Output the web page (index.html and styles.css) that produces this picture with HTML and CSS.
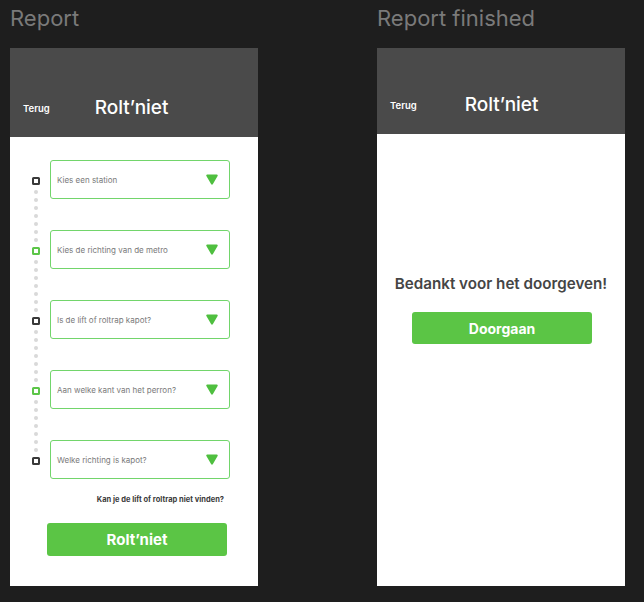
FILE: index.html
```html
<!DOCTYPE html>
<html lang="nl">
<head>
<meta charset="utf-8">
<title>Rolt'niet</title>
<link rel="stylesheet" href="styles.css">
</head>
<body>
<div class="board">
  <section class="artboard">
    <div class="label">Report</div>
    <div class="frame">
      <header class="header header--tall">
        <span class="back">Terug</span>
        <span class="title title--left">Rolt’niet</span>
      </header>
      <main class="body body--form">
        <div class="steps">
          <div class="timeline">
            <span class="sq"></span>
            <span class="dots"><i></i><i></i><i></i><i></i><i></i><i></i><i></i></span>
            <span class="sq sq--green"></span>
            <span class="dots"><i></i><i></i><i></i><i></i><i></i><i></i><i></i></span>
            <span class="sq"></span>
            <span class="dots"><i></i><i></i><i></i><i></i><i></i><i></i><i></i></span>
            <span class="sq sq--green"></span>
            <span class="dots"><i></i><i></i><i></i><i></i><i></i><i></i><i></i></span>
            <span class="sq"></span>
          </div>
          <div class="fields">
            <div class="select"><span>Kies een station</span><svg class="caret" viewBox="0 0 12 11"><path d="M1.2 0.6h9.6c0.8 0 1.2 0.8 0.8 1.4l-4.8 8.3c-0.4 0.6-1.2 0.6-1.6 0l-4.8-8.3c-0.4-0.6 0-1.4 0.8-1.4z"/></svg></div>
            <div class="select"><span>Kies de richting van de metro</span><svg class="caret" viewBox="0 0 12 11"><path d="M1.2 0.6h9.6c0.8 0 1.2 0.8 0.8 1.4l-4.8 8.3c-0.4 0.6-1.2 0.6-1.6 0l-4.8-8.3c-0.4-0.6 0-1.4 0.8-1.4z"/></svg></div>
            <div class="select"><span>Is de lift of roltrap kapot?</span><svg class="caret" viewBox="0 0 12 11"><path d="M1.2 0.6h9.6c0.8 0 1.2 0.8 0.8 1.4l-4.8 8.3c-0.4 0.6-1.2 0.6-1.6 0l-4.8-8.3c-0.4-0.6 0-1.4 0.8-1.4z"/></svg></div>
            <div class="select"><span>Aan welke kant van het perron?</span><svg class="caret" viewBox="0 0 12 11"><path d="M1.2 0.6h9.6c0.8 0 1.2 0.8 0.8 1.4l-4.8 8.3c-0.4 0.6-1.2 0.6-1.6 0l-4.8-8.3c-0.4-0.6 0-1.4 0.8-1.4z"/></svg></div>
            <div class="select"><span>Welke richting is kapot?</span><svg class="caret" viewBox="0 0 12 11"><path d="M1.2 0.6h9.6c0.8 0 1.2 0.8 0.8 1.4l-4.8 8.3c-0.4 0.6-1.2 0.6-1.6 0l-4.8-8.3c-0.4-0.6 0-1.4 0.8-1.4z"/></svg></div>
          </div>
        </div>
        <p class="hint">Kan je de lift of roltrap niet vinden?</p>
        <button class="btn btn--submit">Rolt’niet</button>
      </main>
    </div>
  </section>

  <section class="artboard">
    <div class="label">Report finished</div>
    <div class="frame">
      <header class="header header--short">
        <span class="back">Terug</span>
        <span class="title title--right">Rolt’niet</span>
      </header>
      <main class="body body--done">
        <p class="thanks">Bedankt voor het doorgeven!</p>
        <button class="btn btn--next">Doorgaan</button>
      </main>
    </div>
  </section>
</div>
</body>
</html>
```

FILE: styles.css
```css
* { box-sizing: border-box; }

html, body {
  margin: 0;
  padding: 0;
  background: #1e1e1e;
  font-family: Inter, "Noto Sans", "Liberation Sans", sans-serif;
  width: 644px;
  height: 602px;
  overflow: hidden;
}

.board {
  display: flex;
  gap: 119px;
  padding-left: 10px;
}

.artboard {
  display: flex;
  flex-direction: column;
  width: 248px;
}

.label {
  height: 48px;
  padding-top: 6px;
  font-size: 22px;
  line-height: 25px;
  color: #7a7a7a;
  white-space: nowrap;
}

.frame {
  height: 538px;
  background: #ffffff;
  display: flex;
  flex-direction: column;
}

.header {
  background: #4a4a4a;
  display: flex;
  align-items: flex-start;
  padding-left: 13px;
  color: #ffffff;
  flex: none;
}
.header--tall { height: 89px; padding-top: 48px; }
.header--short { height: 86px; padding-top: 45px; }

.back {
  font-size: 9.5px;
  line-height: 12px;
  font-weight: 600;
  margin-top: 7px;
}

.title {
  font-size: 19px;
  line-height: 24px;
  font-weight: 500;
}
.title--left { margin-left: 45px; }
.title--right { margin-left: 48px; }

.body {
  flex: 1;
  display: flex;
  flex-direction: column;
}

.body--form {
  padding: 23px 28px 0 22px;
}

.steps {
  display: flex;
  gap: 10px;
}

.timeline {
  width: 8px;
  padding-top: 17px;
  display: flex;
  flex-direction: column;
  align-items: center;
}

.sq {
  width: 8px;
  height: 8px;
  border: 2px solid #3a3a3a;
  border-radius: 1.5px;
  background: #fff;
  flex: none;
}
.sq--green { border-color: #5cc648; }

.dots {
  display: flex;
  flex-direction: column;
  align-items: center;
  gap: 4px;
  height: 62px;
  padding-top: 5px;
  flex: none;
}
.dots i {
  display: block;
  width: 4px;
  height: 4px;
  border-radius: 50%;
  background: #d9d9d9;
  flex: none;
}

.fields {
  flex: 1;
  display: flex;
  flex-direction: column;
  gap: 31px;
}

.select {
  height: 39px;
  border: 1.5px solid #72d56b;
  border-radius: 3px;
  display: flex;
  align-items: center;
  justify-content: space-between;
  padding: 0 11px 0 6px;
  font-size: 8px;
  color: #7a7a7a;
}

.caret {
  width: 12px;
  height: 11px;
  fill: #4fbf3f;
}

.hint {
  margin: 16px 6px 0 0;
  text-align: right;
  font-size: 7.5px;
  line-height: 10px;
  font-weight: 700;
  color: #3a3a3a;
}

.btn {
  display: block;
  width: 180px;
  border: none;
  border-radius: 3px;
  background: #5bc545;
  color: #ffffff;
  font-family: inherit;
  font-weight: 700;
  padding: 0;
  cursor: pointer;
}

.btn--submit {
  height: 33px;
  margin: 18px 0 0 15px;
  font-size: 15px;
}

.body--done {
  align-items: center;
  padding-top: 141px;
}

.thanks {
  margin: 0;
  font-size: 15.2px;
  line-height: 18px;
  font-weight: 600;
  color: #454545;
}

.btn--next {
  height: 32px;
  margin: 19px 0 0 2px;
  font-size: 14px;
}
```
